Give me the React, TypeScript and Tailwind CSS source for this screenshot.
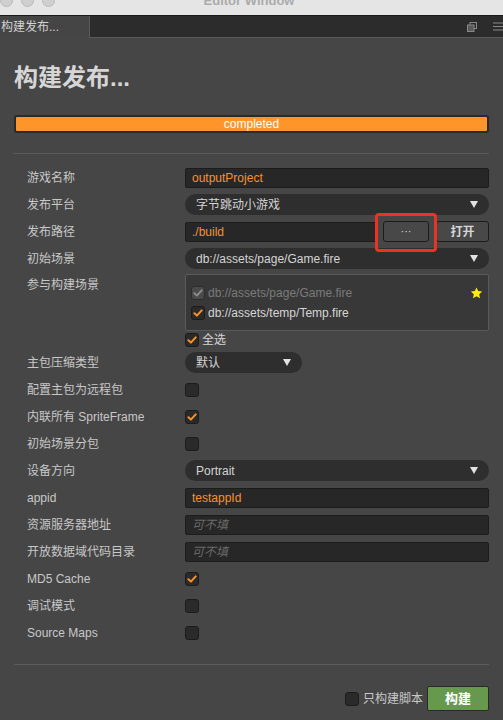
import React from 'react';

const FONT = "font-['Liberation_Sans','Noto_Sans_CJK_SC',sans-serif]";

const Check = ({ checked = false, dim = false }: { checked?: boolean; dim?: boolean }) => (
  <span
    className={`flex h-[14px] w-[14px] shrink-0 items-center justify-center rounded-[3px] border ${
      dim ? 'border-[#2c2c2c] bg-[#4a4a4a]' : 'border-[#1c1c1c] bg-[#2a2a2a]'
    }`}
  >
    {checked && (
      <svg width="10" height="10" viewBox="0 0 10 10">
        <path
          d="M1.4 5.3 L3.9 7.6 L8.7 2.4"
          fill="none"
          stroke={dim ? '#8a8a8a' : '#f7922b'}
          strokeWidth="2"
          strokeLinecap="round"
          strokeLinejoin="round"
        />
      </svg>
    )}
  </span>
);

const Arrow = () => (
  <svg width="8" height="7" viewBox="0 0 8 7">
    <path d="M0 0 H8 L4 7 Z" fill="#e2e2e2" />
  </svg>
);

const Select = ({ value, className = 'w-full' }: { value: string; className?: string }) => (
  <div
    className={`flex h-[21px] items-center justify-between rounded-full bg-[#2e2e2e] px-[11px] text-[12px] text-[#d4d4d4] ${className}`}
  >
    <span>{value}</span>
    <Arrow />
  </div>
);

const Input = ({ value, placeholder }: { value?: string; placeholder?: string }) => (
  <div className="flex h-[20px] w-full items-center rounded-[2px] border border-[#1c1c1c] bg-[#272727] px-[6px] text-[12px]">
    {value ? (
      <span className="text-[#f7922b]">{value}</span>
    ) : (
      <span className="italic text-[#6a6a6a]">{placeholder}</span>
    )}
  </div>
);

const Row = ({ label, children }: { label: string; children: React.ReactNode }) => (
  <div className="flex h-[27px] items-center pl-[13px]">
    <div className="w-[158px] shrink-0 text-[12px] text-[#c8c8c8]">{label}</div>
    <div className="flex flex-1 items-center">{children}</div>
  </div>
);

const App: React.FC = () => {
  return (
    <div className={`${FONT} flex h-[720px] w-[503px] flex-col overflow-hidden bg-[#464646]`}>
      {/* mac title bar (clipped) */}
      <div className="h-[16px] shrink-0 overflow-hidden border-b border-[#1a1a1a] bg-[#e5e5e5]">
        <div className="-mt-[6px] flex items-start">
          <div className="flex gap-[8px]">
            <span className="h-[13px] w-[13px] rounded-full border border-[#b9b9b9] bg-[#cfcfcf]" />
            <span className="h-[13px] w-[13px] rounded-full border border-[#b9b9b9] bg-[#cfcfcf]" />
            <span className="h-[13px] w-[13px] rounded-full border border-[#b9b9b9] bg-[#cfcfcf]" />
          </div>
          <div className="-mt-px flex-1 pr-[60px] text-center text-[13px] font-bold leading-[16px] text-[#ababab]">
            Editor Window
          </div>
        </div>
      </div>

      {/* tab bar */}
      <div className="flex h-[22px] shrink-0 items-stretch bg-[#2c2c2c]">
        <div className="flex w-[90px] items-center border-r border-[#5a5a5a] bg-[#454545] pl-px text-[12px] text-[#d2d2d2]">
          构建发布...
        </div>
        <div className="flex flex-1 items-center justify-end gap-[16px] border-b border-[#5a5a5a]">
          <svg width="10" height="10" viewBox="0 0 10 10">
            <rect x="3" y="0.5" width="6.5" height="6" fill="none" stroke="#888" />
            <rect x="0.5" y="3" width="6.5" height="6.5" fill="#5a5a5a" stroke="#888" />
          </svg>
          <svg width="10" height="9" viewBox="0 0 10 9">
            <path d="M0 1 H10 M0 4.5 H10 M0 8 H10" stroke="#888" strokeWidth="1.2" />
          </svg>
        </div>
      </div>

      {/* content */}
      <div className="flex flex-1 flex-col px-[14px]">
        <h1 className="mt-[24px] text-[24px] font-bold leading-[32px] text-[#d6d6d6]">构建发布...</h1>

        <div className="mt-[21px] flex h-[18px] items-center justify-center rounded-[3px] border-2 border-[#2a2a2a] bg-[#fd952b] text-[12px] text-white">
          completed
        </div>

        <div className="mt-[20px] h-px bg-[#5c5c5c]" />

        <div className="mt-[10px] flex flex-col">
          <Row label="游戏名称">
            <Input value="outputProject" />
          </Row>
          <Row label="发布平台">
            <Select value="字节跳动小游戏" />
          </Row>
          <Row label="发布路径">
            <div className="flex w-full items-center">
              <div className="flex-1">
                <Input value="./build" />
              </div>
              <div className="relative ml-[6px]">
                <div className="flex h-[21px] w-[46px] items-center justify-center rounded-[3px] border border-[#1c1c1c] bg-[#484848] text-[11px] leading-none text-[#d6d6d6]">
                  ···
                </div>
                <div className="pointer-events-none absolute -bottom-[10px] -left-[8px] -right-[8px] -top-[8px] rounded-[4px] border-[3px] border-[#ea3323]" />
              </div>
              <div className="ml-[7px] flex h-[21px] w-[53px] items-center justify-center rounded-[3px] border border-[#1c1c1c] bg-[#484848] text-[12px] font-bold text-[#d6d6d6]">
                打开
              </div>
            </div>
          </Row>
          <Row label="初始场景">
            <Select value="db://assets/page/Game.fire" />
          </Row>

          {/* scene list */}
          <div className="flex pl-[13px]">
            <div className="h-[27px] w-[158px] shrink-0 text-[12px] leading-[27px] text-[#c8c8c8]">参与构建场景</div>
            <div className="flex flex-1 flex-col pt-[2px]">
              <div className="flex h-[57px] flex-col gap-[3px] rounded-[2px] border border-[#5a5a5a] bg-[#383838] px-[5px] pt-[9px]">
                <div className="flex h-[17px] items-center gap-[3px]">
                  <Check checked dim />
                  <span className="flex-1 text-[12px] text-[#7b7b7b]">db://assets/page/Game.fire</span>
                  <svg width="13" height="12" viewBox="0 0 24 23">
                    <path
                      d="M12 0.8 L15.2 7.9 L23 8.7 L17.1 13.9 L18.8 21.6 L12 17.6 L5.2 21.6 L6.9 13.9 L1 8.7 L8.8 7.9 Z"
                      fill="#ffee00"
                    />
                  </svg>
                </div>
                <div className="flex h-[17px] items-center gap-[3px]">
                  <Check checked />
                  <span className="text-[12px] text-[#d6d6d6]">db://assets/temp/Temp.fire</span>
                </div>
              </div>
              <div className="mb-[2px] mt-[2px] flex h-[14px] items-center gap-[3px]">
                <Check checked />
                <span className="text-[12px] text-[#d6d6d6]">全选</span>
              </div>
            </div>
          </div>

          <Row label="主包压缩类型">
            <Select value="默认" className="w-[117px]" />
          </Row>
          <Row label="配置主包为远程包">
            <Check />
          </Row>
          <Row label="内联所有 SpriteFrame">
            <Check checked />
          </Row>
          <Row label="初始场景分包">
            <Check />
          </Row>
          <Row label="设备方向">
            <Select value="Portrait" />
          </Row>
          <Row label="appid">
            <Input value="testappId" />
          </Row>
          <Row label="资源服务器地址">
            <Input placeholder="可不填" />
          </Row>
          <Row label="开放数据域代码目录">
            <Input placeholder="可不填" />
          </Row>
          <Row label="MD5 Cache">
            <Check checked />
          </Row>
          <Row label="调试模式">
            <Check />
          </Row>
          <Row label="Source Maps">
            <Check />
          </Row>
        </div>

        <div className="mt-[18px] h-px bg-[#5c5c5c]" />

        <div className="mt-[21px] flex items-center justify-end">
          <Check />
          <span className="ml-[4px] text-[12px] text-[#c8c8c8]">只构建脚本</span>
          <div className="ml-[4px] flex h-[25px] w-[62px] items-center justify-center rounded-[2px] border border-[#2a2a2a] bg-[#67994c] text-[13px] font-bold text-white">
            构建
          </div>
        </div>
      </div>
    </div>
  );
};

export default App;
